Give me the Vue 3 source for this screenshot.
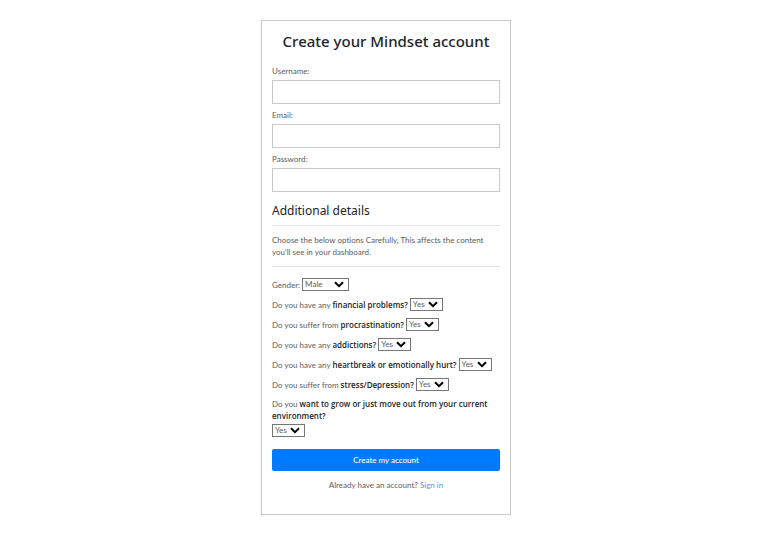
<script setup>
import { reactive } from 'vue'

const fields = [
  { id: 'username', label: 'Username:', type: 'text' },
  { id: 'email', label: 'Email:', type: 'email' },
  { id: 'password', label: 'Password:', type: 'password' },
]

const questions = [
  { id: 'financial', lead: 'Do you have any', topic: 'financial problems?' },
  { id: 'procrastination', lead: 'Do you suffer from', topic: 'procrastination?' },
  { id: 'addictions', lead: 'Do you have any', topic: 'addictions?' },
  { id: 'heartbreak', lead: 'Do you have any', topic: 'heartbreak or emotionally hurt?' },
  { id: 'stress', lead: 'Do you suffer from', topic: 'stress/Depression?' },
  { id: 'growth', lead: 'Do you', topic: 'want to grow or just move out from your current environment?', long: true },
]

const form = reactive({ username: '', email: '', password: '', gender: 'Male' })
const answers = reactive(Object.fromEntries(questions.map((q) => [q.id, 'Yes'])))
</script>

<template>
  <main class="page">
    <form class="card" @submit.prevent>
      <h1 class="title">Create your Mindset account</h1>

      <div v-for="f in fields" :key="f.id" class="field">
        <label :for="f.id">{{ f.label }}</label>
        <input :id="f.id" v-model="form[f.id]" :type="f.type" />
      </div>

      <h2 class="subtitle">Additional details</h2>
      <p class="note">
        Choose the below options Carefully, This affects the content you'll see in your dashboard.
      </p>

      <div class="questions">
        <div class="question">
          <label for="gender">Gender:</label>
          <span class="picker wide">
            <select id="gender" v-model="form.gender">
              <option>Male</option>
              <option>Female</option>
            </select>
            <svg class="chevron" viewBox="0 0 10 7" aria-hidden="true"><path d="M1 1.2 5 5.2 9 1.2" /></svg>
          </span>
        </div>
        <div v-for="q in questions" :key="q.id" class="question" :class="{ long: q.long }">
          <label :for="q.id">{{ q.lead }} <strong>{{ q.topic }}</strong></label>
          <span class="picker">
            <select :id="q.id" v-model="answers[q.id]">
              <option>Yes</option>
              <option>No</option>
            </select>
            <svg class="chevron" viewBox="0 0 10 7" aria-hidden="true"><path d="M1 1.2 5 5.2 9 1.2" /></svg>
          </span>
        </div>
      </div>

      <button class="submit" type="submit">Create my account</button>
      <p class="signin">Already have an account? <a href="#signin">Sign in</a></p>
    </form>
  </main>
</template>

<style>
body {
  background: #fff;
}
</style>

<style scoped>
.page {
  padding: 20px 0 19px 3px;
  font-family: "Segoe UI", Lato, "Open Sans", sans-serif;
  font-variant-ligatures: none;
  font-size: 8px;
  line-height: 12px;
  color: #5c5c5c;
}
.card {
  box-sizing: border-box;
  max-width: 250px;
  margin: 0 auto;
  padding: 10px 10px 23px;
  border: 1px solid #c8c8c8;
}
.title,
.subtitle {
  margin: 0;
  font-family: "Segoe UI", "Noto Sans", sans-serif;
  font-weight: 500;
  color: #212529;
}
.title {
  margin-bottom: 14px;
  font-size: 15px;
  line-height: 20px;
  text-align: center;
  white-space: nowrap;
}
.field {
  display: flex;
  flex-direction: column;
  gap: 3px;
  margin-bottom: 5px;
}
.field input {
  box-sizing: border-box;
  width: 100%;
  height: 24px;
  padding: 0 6px;
  border: 1px solid #c8c8c8;
  border-radius: 0;
  font: inherit;
}
.subtitle {
  padding: 6px 0;
  font-size: 12px;
  font-weight: 400;
  line-height: 16px;
}
.note {
  margin: 0 0 11px;
  padding: 8px 0;
  border: solid #e3e3e3;
  border-width: 1px 0;
}
.questions {
  display: flex;
  flex-direction: column;
  gap: 7px;
}
.question {
  display: flex;
  align-items: center;
  gap: 2px;
  height: 13px;
}
.question.long {
  flex-direction: column;
  align-items: flex-start;
  height: auto;
}
strong {
  font-family: "Segoe UI", "Open Sans", sans-serif;
  font-weight: 600;
  line-height: 10px;
  color: #212529;
}
.picker {
  position: relative;
  display: flex;
  width: 33px;
}
.picker.wide {
  width: 47px;
}
.picker select {
  box-sizing: border-box;
  width: 100%;
  height: 13px;
  padding: 0 0 0 2px;
  border: 1px solid #767676;
  border-radius: 0;
  appearance: none;
  background: #fff;
  color: #5c5c5c;
  font: inherit;
  line-height: 11px;
}
.chevron {
  position: absolute;
  top: 3px;
  right: 5px;
  width: 10px;
  height: 7px;
  fill: none;
  stroke: #000;
  stroke-width: 2;
  pointer-events: none;
}
.submit {
  display: block;
  width: 100%;
  height: 22px;
  margin: 12px 0 8px;
  padding: 0;
  border: 0;
  border-radius: 2px;
  background: #007bff;
  color: #fff;
  font: inherit;
  font-weight: 500;
}
.signin {
  margin: 0;
  text-align: center;
}
.signin a {
  color: #6c8cff;
  text-decoration: none;
}
</style>
